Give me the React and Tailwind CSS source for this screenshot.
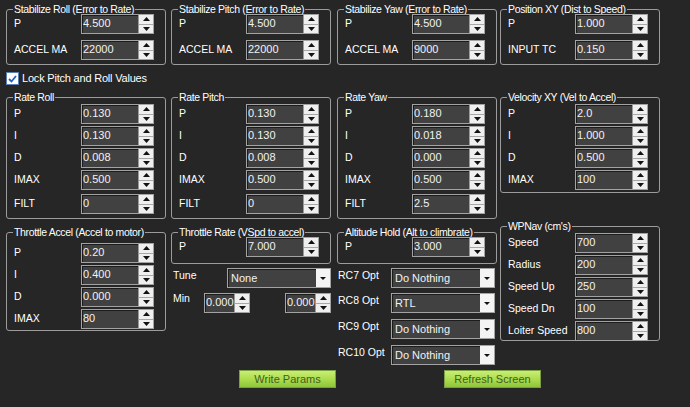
import React from "react";

const Spinner = () => (
  <div className="flex flex-col w-[15px] h-full bg-[#efefef] border-l border-[#9a9a9a]">
    <div className="flex-1 flex items-center justify-center border-b border-[#a8a8a8]">
      <svg width="7" height="4" viewBox="0 0 7 4">
        <path d="M3.5 0 L7 4 L0 4 Z" fill="#111" />
      </svg>
    </div>
    <div className="flex-1 flex items-center justify-center">
      <svg width="7" height="4" viewBox="0 0 7 4">
        <path d="M0 0 L7 0 L3.5 4 Z" fill="#111" />
      </svg>
    </div>
  </div>
);

const Num = ({ value, className = "w-[73px]" }) => (
  <div className={`flex h-[20px] border border-[#a3a3a3] bg-[#414141] ${className}`}>
    <div className="flex-1 overflow-hidden whitespace-nowrap pl-[1px] leading-[17px] text-[11px] text-[#f2f2f2] shadow-[inset_1px_1px_0_#1c1c1c]">
      {value}
    </div>
    <Spinner />
  </div>
);

const Select = ({ value }) => (
  <div className="flex h-[20px] w-[104px] border border-[#a3a3a3] bg-[#414141]">
    <div className="flex-1 pl-[3px] leading-[18px] text-[11px] text-[#f2f2f2] shadow-[inset_1px_1px_0_#1c1c1c]">
      {value}
    </div>
    <div className="w-[14px] bg-[#f4f4f4] flex items-center justify-center">
      <svg width="6" height="3" viewBox="0 0 6 3">
        <path d="M0 0 L6 0 L3 3 Z" fill="#111" />
      </svg>
    </div>
  </div>
);

const Group = ({ title, className, children }) => (
  <div className={`w-[160px] border border-[#9c9c9c] rounded-[3px] ${className}`}>
    <div className="-mt-[7px] ml-[6px] w-fit h-[12px] px-[1px] bg-[#262626] leading-[12px] whitespace-nowrap text-[10.5px] tracking-[-0.35px]">
      {title}
    </div>
    {children}
  </div>
);

const Row = ({ label, value, className = "" }) => (
  <div className={`flex items-center h-[20px] ${className}`}>
    <div className="w-[74px] pl-[7px] whitespace-nowrap">{label}</div>
    <Num value={value} />
  </div>
);

const PidGroup = ({ title, rows, className }) => (
  <Group title={title} className={className}>
    {rows.map((r, i) => (
      <Row
        key={r[0]}
        label={r[0]}
        value={r[1]}
        className={i === 0 ? "mt-[1px]" : r[0] === "FILT" ? "mt-[4px]" : "mt-[2px]"}
      />
    ))}
  </Group>
);

const Label = ({ children, className = "" }) => (
  <div className={`leading-[14px] whitespace-nowrap ${className}`}>{children}</div>
);

const RcRow = ({ label, value, className }) => (
  <div className={`flex items-start h-[20px] ${className}`}>
    <Label className="w-[54px] pl-[1px]">{label}</Label>
    <Select value={value} />
  </div>
);

const GreenButton = ({ children, className }) => (
  <button
    className={`w-[97px] h-[18px] border border-[#7c9f45] bg-gradient-to-b from-[#c9ee74] via-[#aedd4f] to-[#8fc53a] text-[#40601c] text-[11px] leading-[15px] ${className}`}
  >
    {children}
  </button>
);

export default function App() {
  return (
    <div className="w-[690px] h-[407px] bg-[#262626] text-white text-[10.5px] font-['Liberation_Sans',Arial,sans-serif] overflow-hidden">
      {/* top row */}
      <div className="flex pt-[9px]">
        <Group title="Stabilize Roll (Error to Rate)" className="ml-[6px] h-[56px]">
          <Row label="P" value="4.500" className="-mt-[1px]" />
          <Row label="ACCEL MA" value="22000" className="mt-[6px]" />
        </Group>
        <Group title="Stabilize Pitch (Error to Rate)" className="ml-[5px] h-[56px]">
          <Row label="P" value="4.500" className="-mt-[1px]" />
          <Row label="ACCEL MA" value="22000" className="mt-[6px]" />
        </Group>
        <Group title="Stabilize Yaw (Error to Rate)" className="ml-[6px] h-[56px]">
          <Row label="P" value="4.500" className="-mt-[1px]" />
          <Row label="ACCEL MA" value="9000" className="mt-[6px]" />
        </Group>
        <Group title="Position XY (Dist to Speed)" className="ml-[3px] h-[56px]">
          <Row label="P" value="1.000" className="-mt-[1px]" />
          <Row label="INPUT TC" value="0.150" className="mt-[6px]" />
        </Group>
      </div>

      {/* lock checkbox */}
      <div className="flex items-center h-[13px] mt-[7px] ml-[6px]">
        <div className="w-[13px] h-[13px] bg-white border border-[#5a7fb0] flex items-center justify-center">
          <svg width="9" height="8" viewBox="0 0 9 8">
            <path d="M1 4 L3.5 6.5 L8 1" stroke="#1f63c6" strokeWidth="1.8" fill="none" />
          </svg>
        </div>
        <span className="ml-[3px] leading-[13px] text-[11px] tracking-[-0.2px]">Lock Pitch and Roll Values</span>
      </div>

      {/* lower area */}
      <div className="flex items-start h-[285px]">
        <div className="ml-[6px] mt-[12px]">
          <PidGroup
            title="Rate Roll"
            className="h-[122px]"
            rows={[["P", "0.130"], ["I", "0.130"], ["D", "0.008"], ["IMAX", "0.500"], ["FILT", "0"]]}
          />
          <Group title="Throttle Accel (Accel to motor)" className="mt-[13px] h-[99px]">
            <Row label="P" value="0.20" className="mt-[5px]" />
            <Row label="I" value="0.400" className="mt-[2px]" />
            <Row label="D" value="0.000" className="mt-[2px]" />
            <Row label="IMAX" value="80" className="mt-[2px]" />
          </Group>
        </div>

        <div className="ml-[5px] mt-[12px] w-[160px]">
          <PidGroup
            title="Rate Pitch"
            className="h-[122px]"
            rows={[["P", "0.130"], ["I", "0.130"], ["D", "0.008"], ["IMAX", "0.500"], ["FILT", "0"]]}
          />
          <Group title="Throttle Rate (VSpd to accel)" className="mt-[13px] h-[32px]">
            <Row label="P" value="7.000" className="-mt-[1px]" />
          </Group>
          <div className="flex items-start mt-[4px] h-[20px]">
            <Label className="w-[56px] pl-[2px]">Tune</Label>
            <Select value="None" />
          </div>
          <div className="flex items-start mt-[5px] h-[20px]">
            <Label className="w-[33px] pl-[2px] -mt-[2px]">Min</Label>
            <Num value="0.000" className="w-[46px]" />
            <Num value="0.000" className="ml-[35px] w-[46px]" />
          </div>
        </div>

        <div className="ml-[6px] mt-[12px] w-[160px]">
          <PidGroup
            title="Rate Yaw"
            className="h-[122px]"
            rows={[["P", "0.180"], ["I", "0.018"], ["D", "0.000"], ["IMAX", "0.500"], ["FILT", "2.5"]]}
          />
          <Group title="Altitude Hold (Alt to climbrate)" className="mt-[13px] h-[32px]">
            <Row label="P" value="3.000" className="-mt-[1px]" />
          </Group>
          <RcRow label="RC7 Opt" value="Do Nothing" className="mt-[4px]" />
          <RcRow label="RC8 Opt" value="RTL" className="mt-[5px]" />
          <RcRow label="RC9 Opt" value="Do Nothing" className="mt-[6px]" />
          <RcRow label="RC10 Opt" value="Do Nothing" className="mt-[6px]" />
        </div>

        <div className="ml-[3px] mt-[12px]">
          <PidGroup
            title="Velocity XY (Vel to Accel)"
            className="h-[96px]"
            rows={[["P", "2.0"], ["I", "1.000"], ["D", "0.500"], ["IMAX", "100"]]}
          />
          <Group title="WPNav (cm's)" className="mt-[33px] h-[115px]">
            <Row label="Speed" value="700" className="mt-[1px]" />
            <Row label="Radius" value="200" className="mt-[2px]" />
            <Row label="Speed Up" value="250" className="mt-[2px]" />
            <Row label="Speed Dn" value="100" className="mt-[2px]" />
            <Row label="Loiter Speed" value="800" className="mt-[2px]" />
          </Group>
        </div>
      </div>

      {/* buttons */}
      <div className="flex">
        <GreenButton className="ml-[239px]">Write Params</GreenButton>
        <GreenButton className="ml-[108px]">Refresh Screen</GreenButton>
      </div>
    </div>
  );
}
